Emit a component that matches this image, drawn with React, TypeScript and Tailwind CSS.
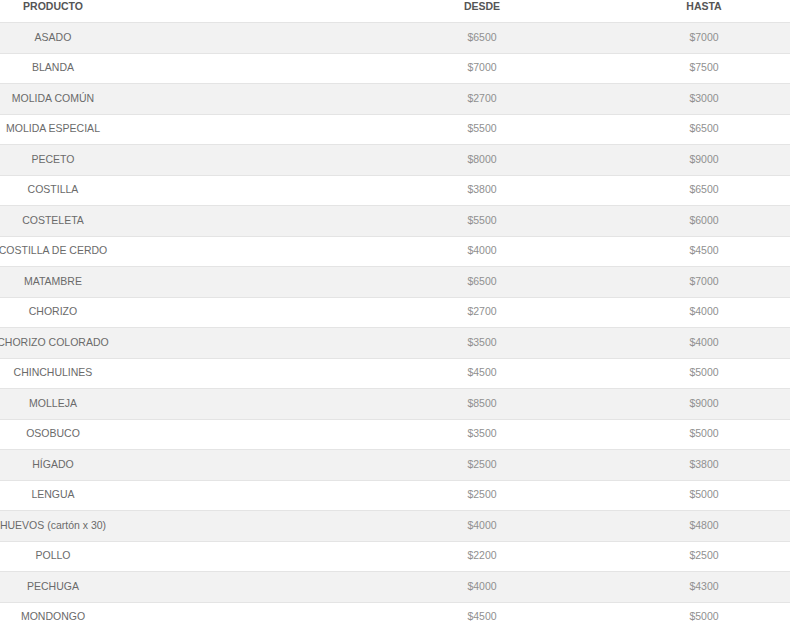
import React from 'react';

const rows: [string, string, string][] = [
  ['ASADO', '$6500', '$7000'],
  ['BLANDA', '$7000', '$7500'],
  ['MOLIDA COMÚN', '$2700', '$3000'],
  ['MOLIDA ESPECIAL', '$5500', '$6500'],
  ['PECETO', '$8000', '$9000'],
  ['COSTILLA', '$3800', '$6500'],
  ['COSTELETA', '$5500', '$6000'],
  ['COSTILLA DE CERDO', '$4000', '$4500'],
  ['MATAMBRE', '$6500', '$7000'],
  ['CHORIZO', '$2700', '$4000'],
  ['CHORIZO COLORADO', '$3500', '$4000'],
  ['CHINCHULINES', '$4500', '$5000'],
  ['MOLLEJA', '$8500', '$9000'],
  ['OSOBUCO', '$3500', '$5000'],
  ['HÍGADO', '$2500', '$3800'],
  ['LENGUA', '$2500', '$5000'],
  ['HUEVOS (cartón x 30)', '$4000', '$4800'],
  ['POLLO', '$2200', '$2500'],
  ['PECHUGA', '$4000', '$4300'],
  ['MONDONGO', '$4500', '$5000'],
];

const cols = 'grid grid-cols-[106px_265px_222px_222px]';

export default function App() {
  return (
    <div
      className="w-[790px] h-[625px] overflow-hidden bg-white text-[10.5px]"
      style={{ fontFamily: '"Liberation Sans", Arial, sans-serif' }}
    >
      <div className={`${cols} h-[23px] border-b border-[#e4e4e4] font-bold text-[#555]`}>
        <div className="flex justify-center whitespace-nowrap leading-[12px]">PRODUCTO</div>
        <div />
        <div className="flex justify-center leading-[12px]">DESDE</div>
        <div className="flex justify-center leading-[12px]">HASTA</div>
      </div>
      {rows.map(([name, from, to], i) => (
        <div
          key={name}
          className={`${cols} h-[30.5px] items-center border-b border-[#e4e4e4] ${
            i % 2 === 0 ? 'bg-[#f2f2f2]' : 'bg-white'
          }`}
        >
          <div className="flex justify-center whitespace-nowrap text-[#6a6a6a]">{name}</div>
          <div />
          <div className="flex justify-center text-[#909090]">{from}</div>
          <div className="flex justify-center text-[#909090]">{to}</div>
        </div>
      ))}
    </div>
  );
}
